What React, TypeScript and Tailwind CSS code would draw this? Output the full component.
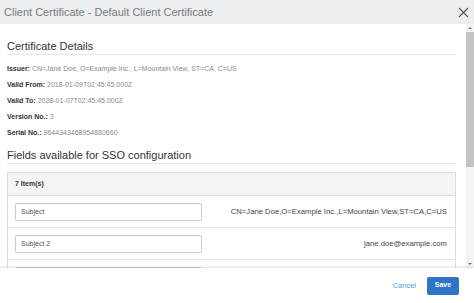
import React from "react";

const details = [
  { label: "Issuer:", value: "CN=Jane Doe, O=Example Inc., L=Mountain View, ST=CA, C=US" },
  { label: "Valid From:", value: "2018-01-09T02:45:45.000Z" },
  { label: "Valid To:", value: "2028-01-07T02:45:45.000Z" },
  { label: "Version No.:", value: "3" },
  { label: "Serial No.:", value: "9644343468954880660" },
];

// third row is only half visible above the footer
const fields = [
  { name: "Subject", value: "CN=Jane Doe,O=Example Inc.,L=Mountain View,ST=CA,C=US" },
  { name: "Subject 2", value: "jane.doe@example.com" },
  { name: "", value: "" },
];

function CloseIcon() {
  return (
    <svg width="11" height="11" viewBox="0 0 11 11" fill="none">
      <path d="M1 1L10 10M10 1L1 10" stroke="#555" strokeWidth="1.1" />
    </svg>
  );
}

function Scrollbar() {
  return (
    <div className="w-[8px] flex flex-col bg-[#f3f3f3]">
      <div className="h-[8px] flex items-center justify-center">
        <div className="w-0 h-0 border-l-[2px] border-r-[2px] border-b-[2px] border-l-transparent border-r-transparent border-b-[#777]" />
      </div>
      <div className="h-[135px] bg-[#c4c4c4]" />
      <div className="flex-1" />
      <div className="h-[8px] flex items-center justify-center">
        <div className="w-0 h-0 border-l-[2px] border-r-[2px] border-t-[2px] border-l-transparent border-r-transparent border-t-[#777]" />
      </div>
    </div>
  );
}

export default function App() {
  return (
    <div
      className="w-[474px] h-[303px] flex flex-col bg-white overflow-hidden"
      style={{ fontFamily: '"Liberation Sans", Arial, sans-serif' }}
    >
      <div className="h-[24px] shrink-0 bg-[#eceff2] flex items-center justify-between pl-[4px] pr-[5px]">
        <span className="text-[11px] text-[#7a7a7a]">Client Certificate - Default Client Certificate</span>
        <CloseIcon />
      </div>

      <div className="flex-1 flex min-h-0">
        <div className="flex-1 overflow-hidden pl-[7px] pr-[10px]">
          <h2 className="mt-[16px] pb-[1px] leading-[13px] text-[11px] text-[#333] border-b border-[#e6e6e6] h-[15px]">
            Certificate Details
          </h2>

          <div className="mt-[6px]">
            {details.map((d) => (
              <div key={d.label} className="h-[16px] leading-[16px] text-[7px]">
                <span className="font-bold text-[#333]">{d.label}</span>{" "}
                <span className="text-[#8a8a8a]">{d.value}</span>
              </div>
            ))}
          </div>

          <h2 className="mt-[8px] leading-[13px] text-[11px] text-[#333] border-b border-[#e6e6e6] h-[15px]">
            Fields available for SSO configuration
          </h2>

          <div className="mt-[8px] border border-[#dddddd]">
            <div className="h-[23px] bg-[#f5f5f5] flex items-center pl-[7px] border-b border-[#dddddd]">
              <span className="text-[7px] font-bold text-[#333]">7 Item(s)</span>
            </div>
            {fields.map((f, i) => (
              <div
                key={i}
                className="h-[32px] flex items-center justify-between pl-[7px] pr-[8px] border-b border-[#e3e3e3]"
              >
                <div className="w-[187px] h-[18px] border border-[#cccccc] rounded-[2px] flex items-center pl-[5px] shadow-[inset_0_1px_1px_rgba(0,0,0,0.06)]">
                  <span className="text-[7px] leading-none text-[#555]">{f.name}</span>
                </div>
                <span className="text-[7.7px] text-[#444]">{f.value}</span>
              </div>
            ))}
          </div>
        </div>
        <Scrollbar />
      </div>

      <div className="h-[35px] shrink-0 flex items-center justify-end gap-[11px] pr-[15px] shadow-[0_-1px_3px_rgba(0,0,0,0.12)] relative bg-white">
        <span className="text-[7.5px] text-[#5b9bd9]">Cancel</span>
        <div className="w-[32px] h-[18px] rounded-[2px] bg-[#2f74c6] flex items-center justify-center">
          <span className="text-[7px] font-bold text-white">Save</span>
        </div>
      </div>
    </div>
  );
}
